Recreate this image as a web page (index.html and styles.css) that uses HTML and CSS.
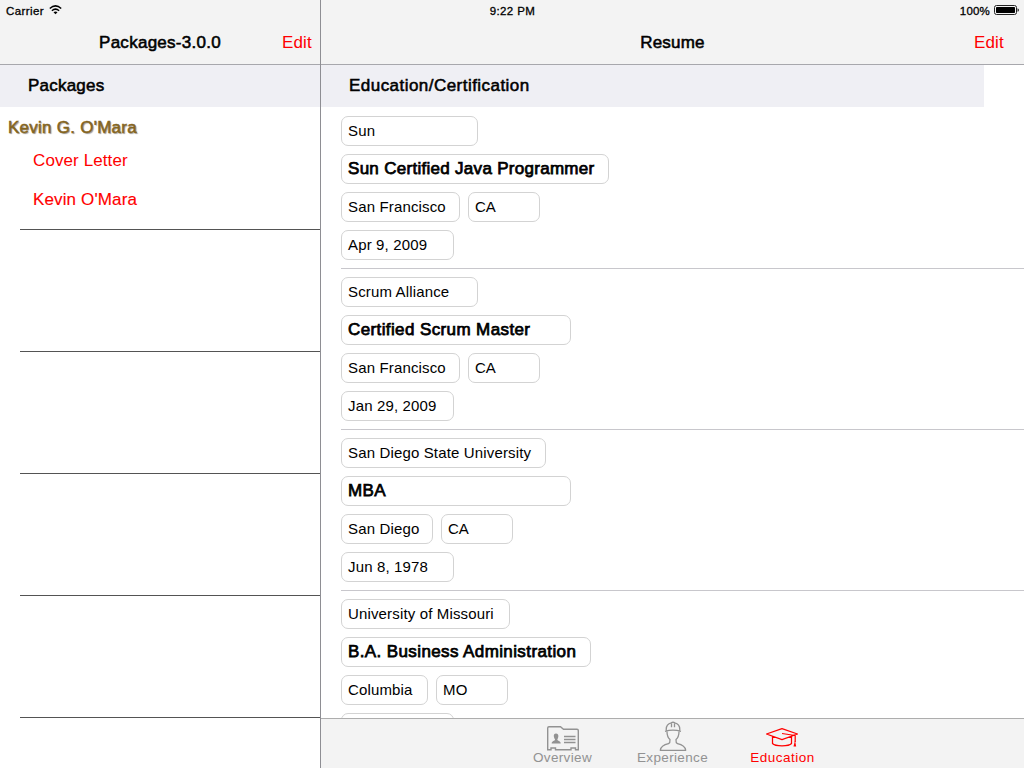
FILE: index.html
```html
<!DOCTYPE html>
<html lang="en">
<head>
<meta charset="utf-8">
<title>Resume</title>
<link rel="stylesheet" href="styles.css">
</head>
<body>
<div class="app">
  <div class="status">
    <div class="carrier"><span>Carrier</span>
      <svg width="14" height="10" viewBox="0 0 14 10"><g fill="none" stroke="#000" stroke-width="1.5"><path d="M.8 3.500Q6.500-1.700 12.200 3.500"/><path d="M2.900 5.700Q6.500 2.500 10.100 5.700"/></g><path d="M4.500 7.200Q6.500 5.700 8.500 7.200L6.500 9.300z"/></svg>
    </div>
    <div class="clock">9:22 PM</div>
    <div class="battery"><span>100%</span>
      <svg width="25" height="10" viewBox="0 0 25 10"><rect x=".5" y=".5" width="22" height="9" rx="2" fill="none" stroke="#222"/><rect x="2" y="2" width="19" height="6" rx=".7"/><path d="M23.600 3.200q1.200.4 1.200 1.800t-1.200 1.800z"/></svg>
    </div>
  </div>
  <aside class="sidebar">
    <header class="nav"><h1 class="medium title-left">Packages-3.0.0</h1><a class="edit">Edit</a></header>
    <h2 class="section medium sec-left">Packages</h2>
    <div class="package">
      <div class="owner medium">Kevin G. O'Mara</div>
      <div class="doc">Cover Letter</div>
      <div class="doc doc-resume">Kevin O'Mara</div>
    </div>
    <div class="slot"></div><div class="slot"></div><div class="slot"></div><div class="slot"></div><div class="slot"></div>
  </aside>
  <main class="detail">
    <header class="nav nav-detail"><h1 class="medium title-right">Resume</h1><a class="edit">Edit</a></header>
    <div class="list">
      <h2 class="section medium sec-right">Education/Certification</h2>
      <section class="entry">
        <div class="field w137">Sun</div>
        <div class="field w268 degree d1">Sun Certified Java Programmer</div>
        <div class="pair"><div class="field w119">San Francisco</div><div class="field w72 state">CA</div></div>
        <div class="field w113">Apr 9, 2009</div>
      </section>
      <section class="entry">
        <div class="field w137">Scrum Alliance</div>
        <div class="field w230 degree d2">Certified Scrum Master</div>
        <div class="pair"><div class="field w119">San Francisco</div><div class="field w72 state">CA</div></div>
        <div class="field w113">Jan 29, 2009</div>
      </section>
      <section class="entry">
        <div class="field w205">San Diego State University</div>
        <div class="field w230 degree">MBA</div>
        <div class="pair"><div class="field w92">San Diego</div><div class="field w72 state">CA</div></div>
        <div class="field w113">Jun 8, 1978</div>
      </section>
      <section class="entry">
        <div class="field w169">University of Missouri</div>
        <div class="field w250 degree">B.A. Business Administration</div>
        <div class="pair"><div class="field w87">Columbia</div><div class="field w72">MO</div></div>
        <div class="field w113"></div>
      </section>
    </div>
    <nav class="tabs">
      <div class="tab">
        <svg class="icon-card" width="34" height="27" viewBox="0 0 34 27"><path d="M3 1.700H14.500L17.500 4.200H31Q32.300 4.200 32.300 5.500V24.700H29.500V23H25V24.700H9.500V23H5V24.700H1.700V3Q1.700 1.700 3 1.700z" fill="none" stroke="#929292" stroke-width="1.4"/><path d="M18 11.500H29.500M18 14.500H29.500M18 17.500H29.500" stroke="#929292" stroke-width="1.3"/><path d="M10 8.500c3.300 0 2.600 4.200 1.300 6 .2 1.800 3.400 1.200 3.400 4H5.700c0-2.800 3.200-2.200 3.400-4C7.800 12.700 6.700 8.500 10 8.500z" fill="#929292"/></svg>
        <span class="tab-label">Overview</span>
      </div>
      <div class="tab">
        <svg class="icon-person" width="30" height="31" viewBox="0 0 30 31"><g fill="none" stroke="#929292" stroke-width="1.3" stroke-linejoin="round"><path d="M8.300 9.800Q7.600 3 13.200 1.800Q15 .7 16.800 1.800Q22.400 3 21.700 9.800M7 10.300Q15 7.800 23 10.300M13.500 2.500V6.300M16.500 2.500V6.300"/><path d="M9 10.500Q9 16 12 18.500Q12.300 21.700 10.500 22.700Q3 24.300 2.300 29.300H27.700Q27 24.300 19.500 22.700Q17.700 21.700 18 18.500Q21 16 21 10.500"/></g></svg>
        <span class="tab-label">Experience</span>
      </div>
      <div class="tab active">
        <svg class="icon-cap" width="34" height="22" viewBox="0 0 34 22"><g fill="none" stroke="red" stroke-width="1.25" stroke-linejoin="round"><path d="M1.500 7L17 1.700L32.500 7L17 12.700zM7.500 9.500V16.500Q9.500 18.800 17 18.800T26.500 16.500V9.500M17 6.500L30.200 8.500V15"/></g><path d="M30 13.500L31.200 19.500H28.500z" fill="red"/></svg>
        <span class="tab-label">Education</span>
      </div>
    </nav>
  </main>
</div>
</body>
</html>
```

FILE: styles.css
```css
* { box-sizing: border-box; }
body { margin: 0; font-family: "Liberation Sans", Arial, sans-serif; color: #000; background: #fff; }
h1, h2 { margin: 0; font-size: 17px; font-weight: 400; }
.medium { -webkit-text-stroke: 0.55px currentColor; }
.app { width: 1024px; height: 768px; overflow: hidden; display: grid; grid-template-columns: 321px 703px; grid-template-rows: 768px; position: relative; }

.status { position: absolute; top: 0; left: 0; width: 1024px; height: 22px; display: grid; grid-template-columns: 1fr auto 1fr; align-items: center; padding: 0 5px 0 6px; font-size: 11.5px; line-height: 22px; -webkit-text-stroke: 0.3px #000; z-index: 1; }
.status svg { -webkit-text-stroke: 0; position: relative; top: -1px; }
.carrier, .battery { display: flex; align-items: center; }
.carrier { gap: 5px; letter-spacing: 0.4px; }
.clock { letter-spacing: 0.4px; }
.battery { justify-content: flex-end; gap: 4px; letter-spacing: 0.2px; }

.sidebar { border-right: 1px solid #8e8e93; overflow: hidden; }
.nav { height: 65px; padding: 21px 8px 0; background: #f3f3f3; border-bottom: 1px solid #a7a7ac; display: grid; grid-template-columns: 1fr auto 1fr; line-height: 43px; font-size: 17px; }
.nav h1 { grid-column: 2; }
.title-left { letter-spacing: 0.27px; }
.title-right { letter-spacing: 0.2px; }
.edit { color: #f00; text-align: right; letter-spacing: 0.2px; }
.nav-detail { padding-right: 20px; padding-left: 20px; }
.section { height: 42px; line-height: 41px; padding-left: 28px; background: #efeff4; letter-spacing: 0.22px; }
.sec-right { width: 663px; letter-spacing: 0.46px; }
.package { height: 122px; padding: 9px 0 0 8px; font-size: 17px; line-height: 24px; }
.owner { color: #85651e; text-shadow: 1px 1px 1px #999; letter-spacing: 0.25px; }
.doc { color: #f00; padding-left: 25px; margin-top: 9px; letter-spacing: 0.1px; }
.doc-resume { margin-top: 15px; letter-spacing: 0.13px; -webkit-text-stroke: 0.15px #f00; }
.slot { height: 122px; margin-left: 20px; border-top: 1px solid #545454; }

.detail { height: 768px; display: grid; grid-template-rows: 65px 653px 50px; }
.list { overflow: hidden; }
.entry { margin-left: 20px; height: 161px; padding-top: 8px; border-top: 1px solid #c8c7cc; display: flex; flex-direction: column; gap: 8px; }
.section + .entry { border-top-color: transparent; }
.pair { display: flex; gap: 8px; }
.field { height: 30px; flex: none; border: 1px solid #d3d3d3; border-radius: 7px; padding-left: 6px; line-height: 28px; font-size: 15px; white-space: nowrap; letter-spacing: 0.15px; }
.state { letter-spacing: -0.2px; }
.degree { font-size: 17px; line-height: 27px; letter-spacing: 0.39px; -webkit-text-stroke: 0.75px #000; }
.d1 { letter-spacing: 0.29px; }
.w72 { width: 72px; }
.w87 { width: 87px; }
.w92 { width: 92px; }
.w113 { width: 113px; }
.w119 { width: 119px; }
.w137 { width: 137px; }
.w169 { width: 169px; }
.w205 { width: 205px; }
.w230 { width: 230px; }
.w250 { width: 250px; }
.w268 { width: 268px; }

.tabs { background: #f3f3f3; border-top: 1px solid #adadad; display: flex; justify-content: center; gap: 34px; }
.tab { width: 76px; display: grid; grid-template-rows: 30px 14px; justify-items: center; align-items: center; align-content: start; padding-top: 2px; color: #929292; font-size: 13.5px; line-height: 14px; }
.active { color: #f00; }
.tab-label { letter-spacing: 0.35px; }
.active .tab-label { letter-spacing: 0.5px; }
.icon-card { margin-top: 4px; }
.icon-cap { margin: 3px 1px 0 0; }
```
